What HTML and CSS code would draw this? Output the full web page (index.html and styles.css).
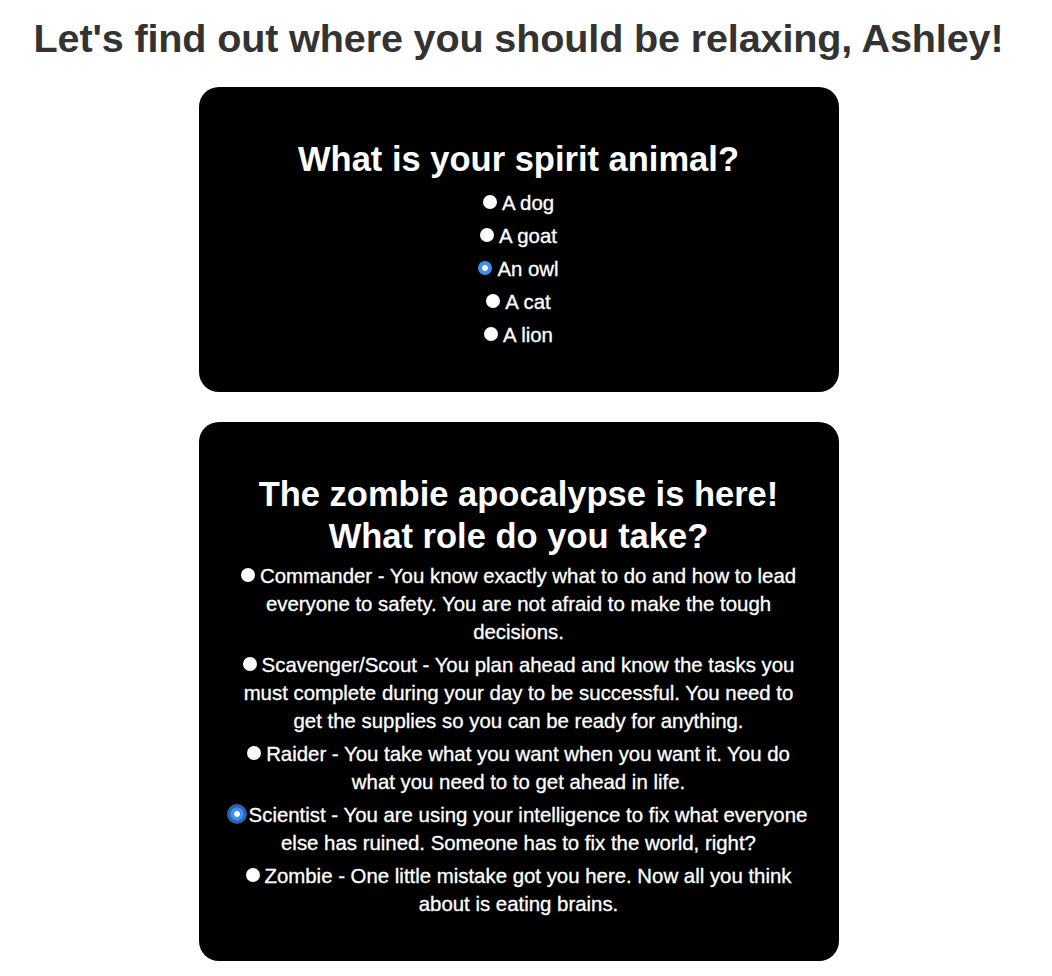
FILE: index.html
```html
<!DOCTYPE html>
<html lang="en">
<head>
<meta charset="utf-8">
<title>Quiz</title>
<link rel="stylesheet" href="styles.css">
</head>
<body>
<div class="page">
  <h1 class="page-title">Let's find out where you should be relaxing, Ashley!</h1>

  <section class="card card-animal">
    <h2 class="card-title">What is your spirit animal?</h2>
    <label class="option"><input type="radio" name="animal">A dog</label>
    <label class="option"><input type="radio" name="animal">A goat</label>
    <label class="option"><input type="radio" name="animal" checked>An owl</label>
    <label class="option"><input type="radio" name="animal">A cat</label>
    <label class="option"><input type="radio" name="animal">A lion</label>
  </section>

  <section class="card card-zombie">
    <h2 class="card-title">The zombie apocalypse is here!<br>What role do you take?</h2>
    <label class="option"><input type="radio" name="role">Commander - You know exactly what to do and how to lead everyone to safety. You are not afraid to make the tough decisions.</label>
    <label class="option"><input type="radio" name="role">Scavenger/Scout - You plan ahead and know the tasks you must complete during your day to be successful. You need to get the supplies so you can be ready for anything.</label>
    <label class="option"><input type="radio" name="role">Raider - You take what you want when you want it. You do what you need to to get ahead in life.</label>
    <label class="option"><input type="radio" name="role" class="focused" checked>Scientist - You are using your intelligence to fix what everyone else has ruined. Someone has to fix the world, right?</label>
    <label class="option"><input type="radio" name="role">Zombie - One little mistake got you here. Now all you think about is eating brains.</label>
  </section>
</div>
</body>
</html>
```

FILE: styles.css
```css
html, body {
  margin: 0;
  padding: 0;
  background: #ffffff;
}

body {
  font-family: "Liberation Sans", Arial, Helvetica, sans-serif;
  color: #333333;
}

.page {
  width: 1037px;
  padding-bottom: 20px;
}

.page-title {
  margin: 16px 0 27px;
  font-size: 39.6px;
  line-height: 44px;
  font-weight: 700;
  text-align: center;
  color: #333333;
  letter-spacing: -0.15px;
}

.card {
  width: 580px;
  margin: 0 auto 30px;
  padding: 51px 30px 38px;
  background: #000000;
  border-radius: 20px;
  color: #ffffff;
  text-align: center;
}

.card-title {
  margin: 0;
  font-size: 34.5px;
  line-height: 42px;
  font-weight: 700;
  color: #ffffff;
}

.card-animal .card-title {
  margin-bottom: 9px;
}

.card-zombie .card-title {
  margin-bottom: 5px;
}

.option {
  display: block;
  margin-bottom: 5px;
  font-size: 20.4px;
  line-height: 28px;
  font-weight: 400;
  color: #ffffff;
  -webkit-text-stroke: 0.3px #ffffff;
}

.option input {
  appearance: none;
  -webkit-appearance: none;
  display: inline-block;
  width: 14px;
  height: 14px;
  margin: 0 5px 0 0;
  border-radius: 50%;
  background: #ffffff;
  vertical-align: 1px;
  position: relative;
}

.option input:checked {
  background: radial-gradient(circle, #ffffff 0 2.6px, #3d8ff5 3.2px);
}

.option input.focused {
  box-shadow: 0 0 0 3px #2c64a8;
}
```
